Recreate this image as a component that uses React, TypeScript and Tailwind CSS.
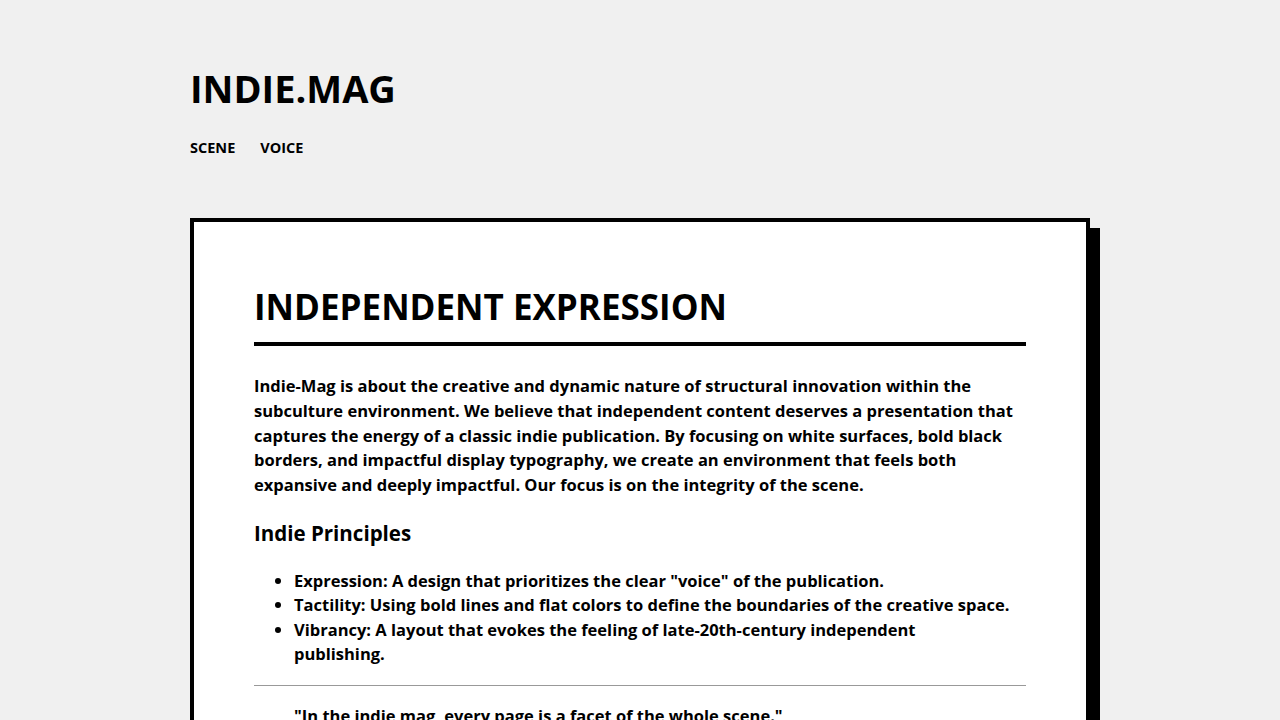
export default function App() {
  return (
    <div
      className="min-h-screen bg-[#f0f0f0] text-black"
      style={{ fontFamily: '"Open Sans", "Noto Sans", sans-serif' }}
    >
      <div className="max-w-[900px] mx-auto">
        <header className="pt-[64px] pb-[60px]">
          <h1 className="text-[38px] leading-[48px] font-bold">INDIE.MAG</h1>
          <nav className="mt-[26px] flex gap-[25px] text-[14.5px] leading-[20px] font-bold">
            <a href="#">SCENE</a>
            <a href="#">VOICE</a>
          </nav>
        </header>

        <main className="bg-white border-4 border-black shadow-[10px_10px_0_#000] px-[60px] pt-[65px] pb-[60px]">
          <h2 className="text-[35px] leading-[40px] font-bold pb-[15px] border-b-4 border-black">
            INDEPENDENT EXPRESSION
          </h2>
          <p className="mt-[28px] text-[16.5px] leading-[24.75px] font-bold">
            Indie-Mag is about the creative and dynamic nature of structural innovation within the
            subculture environment. We believe that independent content deserves a presentation that
            captures the energy of a classic indie publication. By focusing on white surfaces, bold
            black borders, and impactful display typography, we create an environment that feels both
            expansive and deeply impactful. Our focus is on the integrity of the scene.
          </p>
          <h3 className="mt-[21px] text-[20.5px] leading-[28px] font-bold">Indie Principles</h3>
          <ul className="mt-[22px] list-disc pl-[40px] text-[16.5px] leading-[24.5px] font-bold">
            <li>Expression: A design that prioritizes the clear "voice" of the publication.</li>
            <li>Tactility: Using bold lines and flat colors to define the boundaries of the creative space.</li>
            <li>
              Vibrancy: A layout that evokes the feeling of late-20th-century independent
              <br />
              publishing.
            </li>
          </ul>
          <hr className="mt-[18px] border-0 border-t border-[#999]" />
          <blockquote className="mt-[18px] pl-[40px] text-[16.5px] leading-[24.75px] font-bold">
            "In the indie mag, every page is a facet of the whole scene."
          </blockquote>
        </main>
      </div>
    </div>
  );
}
